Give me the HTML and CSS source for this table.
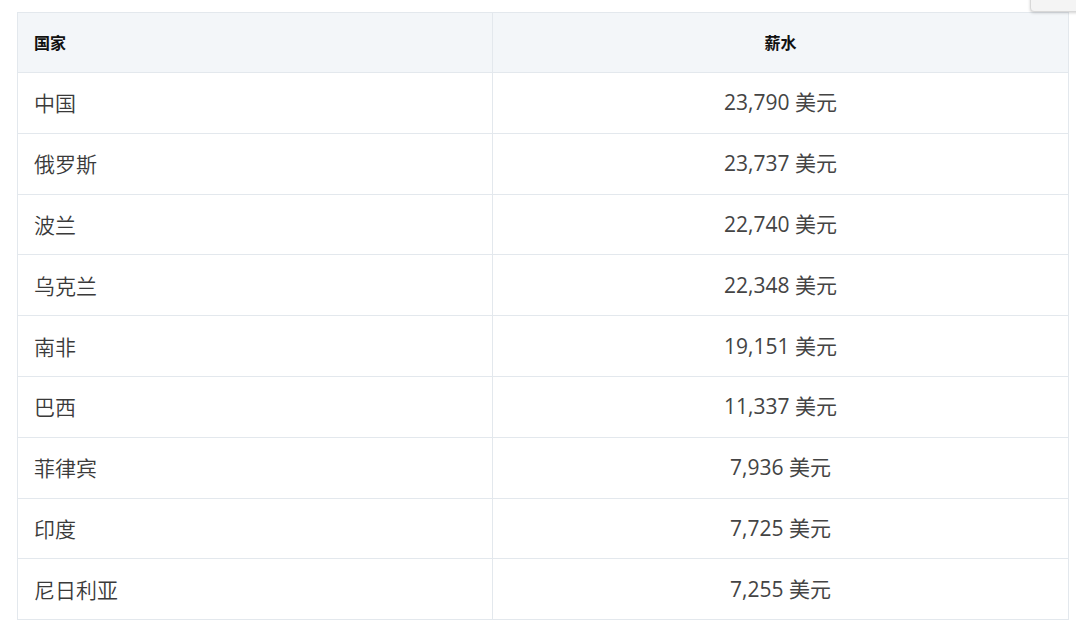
FILE: index.html
```html
<!DOCTYPE html>
<html lang="zh">
<head>
<meta charset="utf-8">
<link rel="stylesheet" href="styles.css">
</head>
<body>
<div class="page">
  <div class="corner-btn"></div>
  <table class="salary">
    <thead>
      <tr><th class="c-country">国家</th><th class="c-salary">薪水</th></tr>
    </thead>
    <tbody>
      <tr><td>中国</td><td class="num">23,790 美元</td></tr>
      <tr><td>俄罗斯</td><td class="num">23,737 美元</td></tr>
      <tr><td>波兰</td><td class="num">22,740 美元</td></tr>
      <tr><td>乌克兰</td><td class="num">22,348 美元</td></tr>
      <tr><td>南非</td><td class="num">19,151 美元</td></tr>
      <tr><td>巴西</td><td class="num">11,337 美元</td></tr>
      <tr><td>菲律宾</td><td class="num">7,936 美元</td></tr>
      <tr><td>印度</td><td class="num">7,725 美元</td></tr>
      <tr><td>尼日利亚</td><td class="num">7,255 美元</td></tr>
    </tbody>
  </table>
</div>
</body>
</html>
```
FILE: styles.css
```css
html, body {
  margin: 0;
  padding: 0;
  background: #ffffff;
}
.page {
  position: relative;
  padding: 12px 0 0 17px;
  font-family: "Open Sans", "Noto Sans CJK SC", sans-serif;
  color: #333333;
}
.corner-btn {
  position: absolute;
  top: -10px;
  left: 1030px;
  width: 70px;
  height: 20px;
  background: #f4f4f4;
  border: 1px solid #d8d8d8;
  border-radius: 4px;
  box-shadow: 0 1px 3px rgba(0,0,0,0.18);
}
.salary {
  width: 1052px;
  border-collapse: collapse;
  table-layout: fixed;
}
.salary th,
.salary td {
  border: 1px solid #e3e8ed;
  padding: 0 16px;
}
.salary th {
  height: 57px;
  padding-bottom: 2px;
  background: #f3f6f9;
  font-size: 16px;
  font-weight: 700;
  color: #111111;
  font-family: "Noto Sans CJK SC", sans-serif;
}
.c-country {
  width: 442px;
  text-align: left;
}
.c-salary {
  text-align: center;
}
.salary td {
  height: 58.8px;
  padding-bottom: 1px;
  font-size: 21px;
  line-height: 28px;
  color: #3a3a3a;
  font-family: "Noto Sans CJK SC", sans-serif;
  font-weight: 350;
}
.salary td.num {
  text-align: center;
  font-family: "Open Sans", "Noto Sans CJK SC", sans-serif;
  font-weight: 400;
  color: #444444;
}
```
